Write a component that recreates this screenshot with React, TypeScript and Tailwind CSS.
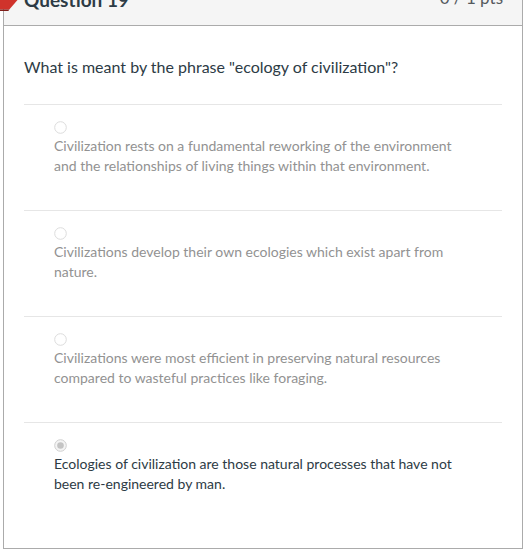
import React from "react";

const options = [
  {
    text: "Civilization rests on a fundamental reworking of the environment and the relationships of living things within that environment.",
    selected: false,
  },
  {
    text: "Civilizations develop their own ecologies which exist apart from nature.",
    selected: false,
  },
  {
    text: "Civilizations were most efficient in preserving natural resources compared to wasteful practices like foraging.",
    selected: false,
  },
  {
    text: "Ecologies of civilization are those natural processes that have not been re-engineered by man.",
    selected: true,
  },
];

function Radio({ checked }: { checked: boolean }) {
  return (
    <svg width="13" height="13" viewBox="0 0 13 13" className="block">
      <circle cx="6.5" cy="6.5" r="5.8" fill={checked ? "#f4f4f4" : "#ffffff"} stroke={checked ? "#cfcfcf" : "#dcdcdc"} strokeWidth="1" />
      {checked && <circle cx="6.5" cy="6.5" r="3.3" fill="#c4c4c4" />}
    </svg>
  );
}

export default function App() {
  return (
    <div className="relative w-[524px] h-[551px] bg-white overflow-hidden font-['Lato','Noto_Sans',sans-serif]">
      <div className="ml-[3px] w-[520px] h-[549px] border-x border-b border-[#ababab]">
        <div className="h-[26px] bg-[#f5f5f5] border-b border-[#ababab] flex justify-between items-start pl-[20px] pr-[19px] overflow-hidden">
          <span className="block -mt-[10px] text-[19px] leading-[20px] font-bold text-[#2d3b45]">Question 19</span>
          <span className="block -mt-[12px] text-[17px] leading-[20px] text-[#555a5e]">0 / 1 pts</span>
        </div>
        <div className="px-[20px]">
          <p className="mt-[29px] mb-[25px] text-[16px] leading-[24px] text-[#2d3b45]">
            What is meant by the phrase "ecology of civilization"?
          </p>
          {options.map((o, i) => (
            <div key={i} className="border-t border-[#e6e6e6] pt-[16px] pb-[34px]">
              <div className="pl-[30px]">
                <Radio checked={o.selected} />
              </div>
              <p
                className={
                  "mt-[2px] pl-[30px] pr-[30px] text-[14px] leading-[20px] " +
                  (o.selected ? "text-[#2d3b45]" : "text-[#929292]")
                }
              >
                {o.text}
              </p>
            </div>
          ))}
        </div>
      </div>
      <svg className="absolute top-0 left-0" width="20" height="12" viewBox="0 0 20 12">
        <polygon points="0,0 17.5,0 9.3,9.5 0,9.5" fill="#d0332b" />
        <polygon points="0,9.5 9.3,9.5 8.4,11 0,11" fill="#7e1d19" />
      </svg>
    </div>
  );
}
